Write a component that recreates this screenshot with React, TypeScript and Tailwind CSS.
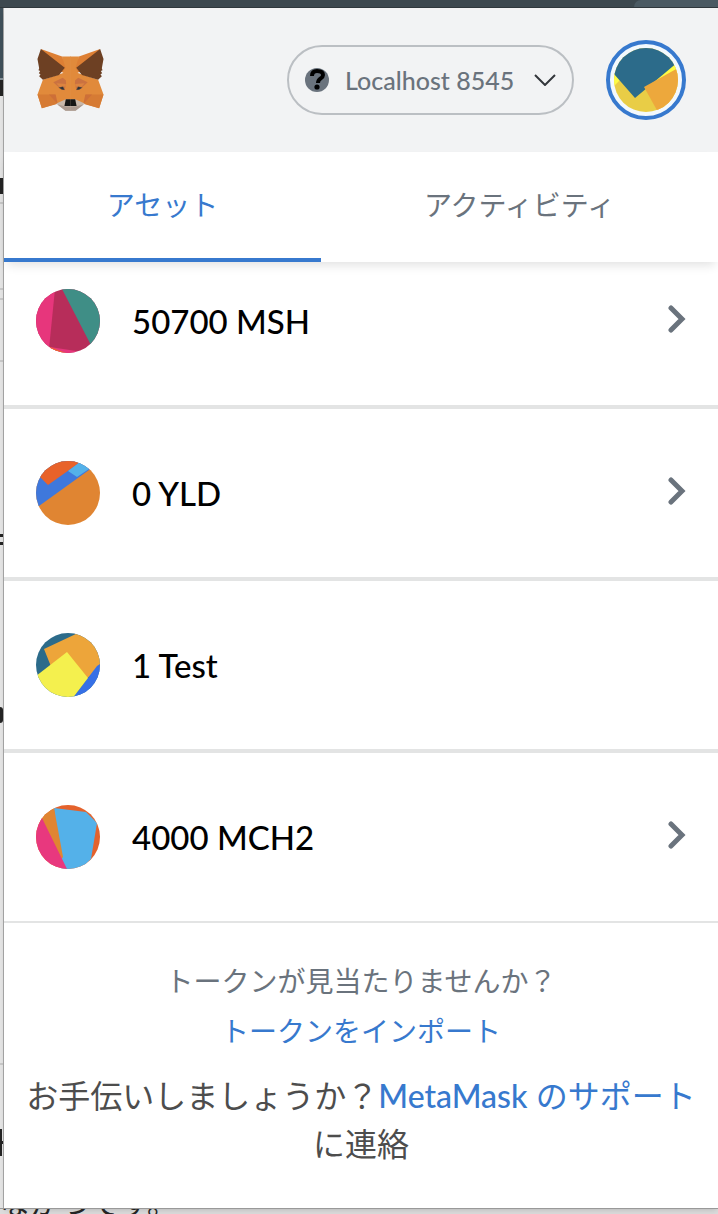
import { useState, type ReactNode } from "react";

interface Token {
  amount: string;
  symbol: string;
  hasDetails: boolean;
  icon: ReactNode;
}

const tokens: Token[] = [
  {
    amount: "50700",
    symbol: "MSH",
    hasDetails: true,
    icon: (
      <>
        <path fill="#b72d5a" d="M0 0h64v64H0z" />
        <path fill="#e7367c" d="M0 0h19l-6 60H0z" />
        <path fill="#3f8e86" d="M26 0h38v64h-5z" />
        <path fill="#e7367c" d="M14 58l26 4v2H14z" />
        <path fill="#ec6a2c" d="M14 58l16 6H14z" />
      </>
    ),
  },
  {
    amount: "0",
    symbol: "YLD",
    hasDetails: true,
    icon: (
      <>
        <path fill="#e08532" d="M0 0h64v64H0z" />
        <path fill="#3f78dc" d="M0 0h64L53 9 3 45l-3 2z" />
        <path fill="#e8622a" d="M0 0h46l-3 2-31 22-8-8z" />
        <path fill="#54b1e9" d="M32 10l9 6 15-10-8-8z" />
      </>
    ),
  },
  {
    amount: "1",
    symbol: "Test",
    hasDetails: false,
    icon: (
      <>
        <path fill="#2c6b8a" d="M0 0h64v64H0z" />
        <path fill="#eda53a" d="M8 16L42 0h22v36L50 46 16 36z" />
        <path fill="#3670e6" d="M64 31l-3 2-25 33h28z" />
        <path fill="#f4f04e" d="M0 43l31-24 21 26-16 21H0z" />
      </>
    ),
  },
  {
    amount: "4000",
    symbol: "MCH2",
    hasDetails: true,
    icon: (
      <>
        <path fill="#e4622c" d="M0 0h64v64H0z" />
        <path fill="#54b1e9" d="M18 3l32 4 11 11-6 36-10 10H24z" />
        <path fill="#e08532" d="M0 0h12l6 3 9 49-3 4L0 12z" />
        <path fill="#e8387e" d="M0 0l6 13 25 51H0z" />
      </>
    ),
  },
];

function TokenIcon({ id, children }: { id: string; children: ReactNode }) {
  return (
    <svg viewBox="0 0 64 64" className="size-16 shrink-0" aria-hidden="true">
      <clipPath id={id}>
        <circle cx="32" cy="32" r="32" />
      </clipPath>
      <g clipPath={`url(#${id})`}>{children}</g>
    </svg>
  );
}

// One side of the face, the other one is mirrored around x = 212
function FoxHalf() {
  return (
    <>
      <path fill="#e18a3b" d="M187 170h26v140h-41l-45 14-13-41 16-44 60-20z" />
      <path fill="#dd7f34" d="M124 148l63 22 10 34-8 14-30-10z" />
      <path fill="#d67b34" d="M114 283h52l6 28-45 13z" />
      <path fill="#cd6f38" d="M148 283h20l6 28z" />
      <path fill="#6d4023" d="M124 148l-10 30 5 27-2 6 5 2-4 7 5 3-4 6 11 10 48-14 17-21z" />
      <path fill="#cb7240" d="M161 247l28-14 9 8 1 10-5 20-16-9z" />
      <path fill="#dc8440" d="M170 250l28 2v7l-18 2z" />
      <path fill="#5b4a40" d="M176 262l14-3 5 11-9-1z" />
      <path fill="#2b3136" d="M181 263l8-2 3 7-6-1z" />
      <path fill="#c9b8ab" d="M170 310l28-13h15v34h-16z" />
      <path fill="#ab9a90" d="M172 312l25 7h16v12h-16z" />
      <path fill="#151515" d="M198 297h15v20h-19z" />
    </>
  );
}

function FoxLogo() {
  return (
    <svg viewBox="113 148 198 184" className="ml-px h-[62px] w-[67px]" role="img" aria-label="MetaMask">
      <FoxHalf />
      <g transform="matrix(-1 0 0 1 424 0)">
        <FoxHalf />
      </g>
    </svg>
  );
}

function NetworkPicker() {
  return (
    <button
      type="button"
      className="flex h-[70px] w-[287px] items-center rounded-full border-2 border-[#bbbfc3] px-4 text-[#6a737d]"
    >
      <svg viewBox="0 0 24 24" className="size-6 shrink-0" aria-hidden="true">
        <circle cx="12" cy="12" r="12" fill="#6a737d" />
        <path d="M7 8q0-5 5-5 6 0 6 4c0 4-5 3-5 8" fill="none" stroke="#000" strokeWidth="4" />
        <circle cx="12" cy="19" r="2.6" fill="#000" />
      </svg>
      <span className="ml-4 flex-1 text-left text-[25px] leading-8 font-medium whitespace-nowrap">
        Localhost 8545
      </span>
      <svg viewBox="0 0 22 12" className="h-3 w-[22px] shrink-0" aria-hidden="true">
        <path d="M1 1l10 10L21 1" fill="none" stroke="#33373b" strokeWidth="2" />
      </svg>
    </button>
  );
}

function AccountButton() {
  return (
    <button
      type="button"
      aria-label="アカウント"
      className="flex size-20 items-center justify-center rounded-full border-4 border-[#3779ce] bg-[#f3f9fd]"
    >
      <TokenIcon id="account">
        <path fill="#e9cd46" d="M0 0h64v64H0z" />
        <path fill="#fdfb45" d="M0 25l6 7-6 6zM40 34l20-18 4 2v8z" />
        <path fill="#2c6b8a" d="M0 0h64v14L21 50 0 26z" />
        <path fill="#eda83c" d="M30 39l34-19v44H44z" />
      </TokenIcon>
    </button>
  );
}

// Sliver of the web page that stays visible left of the popup
function PageEdge() {
  return (
    <div className="flex w-1 shrink-0 flex-col overflow-hidden border-r border-[#aaaaaa] bg-[#e4e4e4]" aria-hidden="true">
      <div className="h-[70px] bg-[#40505a]" />
      <div className="h-[2px] bg-[#87939a]" />
      <div className="h-4 bg-[#242424]" />
      <div className="h-[82px]" />
      <div className="h-4 bg-[#242424]" />
      <div className="mt-2 h-[88px] border-y-2 border-[#c8c8c8]" />
      <div className="mt-2 h-16 border-y-2 border-[#c8c8c8]" />
      <div className="mt-[172px] h-[11px] border-y-[3px] border-[#242424]" />
      <div className="mt-[162px] h-4 w-[3px] rounded-r-full bg-[#242424]" />
      <div className="mt-[340px] h-[2px] bg-[#c8c8c8]" />
      <div className="mt-16 flex h-[27px] items-center border-l-2 border-[#242424]">
        <div className="h-[3px] w-1 bg-[#242424]" />
      </div>
    </div>
  );
}

export default function App() {
  const [tab, setTab] = useState("assets");

  const tabs = [
    { id: "assets", label: "アセット" },
    { id: "activity", label: "アクティビティ" },
  ];

  return (
    <div className="flex min-h-screen flex-col bg-[#dcdcdc] font-['Lato','Noto_Sans_CJK_JP',sans-serif]">
      <div className="flex h-2 justify-end overflow-hidden border-b border-[#30383d] bg-[#3d484f]">
        <div className="w-[84px] rounded-tl-full bg-[#4b5a63]" />
      </div>

      <div className="flex flex-1">
        <PageEdge />

        <div className="flex min-w-0 flex-1 flex-col bg-white shadow-md">
          <header className="flex h-36 items-center bg-[#f2f3f4] px-8">
            <FoxLogo />
            <div className="ml-auto flex items-center gap-8">
              <NetworkPicker />
              <AccountButton />
            </div>
          </header>

          <nav className="z-10 flex h-[110px] shadow-[0_6px_10px_-3px_rgba(0,0,0,0.12)]">
            {tabs.map(({ id, label }) => (
              <button
                key={id}
                type="button"
                onClick={() => setTab(id)}
                className={`flex-auto border-b-4 text-[28px] ${
                  tab === id ? "border-[#3779ce] text-[#3779ce]" : "border-transparent text-[#6a737d]"
                }`}
              >
                {label}
              </button>
            ))}
          </nav>

          <ul>
            {tokens.map(({ amount, symbol, hasDetails, icon }) => (
              <li
                key={symbol}
                className="border-b-4 border-[#e3e4e4] first:-mt-[25px] last:border-b-2"
              >
                <button type="button" className="flex w-full items-center px-8 py-[52px] text-left">
                  <TokenIcon id={symbol}>{icon}</TokenIcon>
                  <span className="ml-8 flex-1 text-[33px] leading-10 font-medium text-black">
                    {amount} {symbol}
                  </span>
                  {hasDetails && (
                    <svg viewBox="0 0 18 28" className="mb-1 h-7 w-[18px]" aria-hidden="true">
                      <path
                        d="M3 3l11 11L3 25"
                        fill="none"
                        stroke="#6a737d"
                        strokeWidth="5"
                        strokeLinecap="round"
                      />
                    </svg>
                  )}
                </button>
              </li>
            ))}
          </ul>

          <footer className="px-4 pt-9 pb-10 text-center">
            <p className="text-[28px] leading-[44px] text-[#6a737d]">トークンが見当たりませんか？</p>
            <a href="#import" className="mt-[6px] block text-[28px] leading-[44px] text-[#3779ce]">
              トークンをインポート
            </a>
            <p className="mt-[19px] text-[32px] leading-[48px] text-[#4d4d4d]">
              お手伝いしましょうか？
              <a href="#support" className="text-[#3779ce]">
                <span className="font-medium">MetaMask</span> のサポート
              </a>
              に連絡
            </p>
          </footer>
        </div>
      </div>

      <div className="flex h-[6px] flex-col justify-end overflow-hidden border-t border-[#999999]" aria-hidden="true">
        <p className="text-[30px] leading-[24px] whitespace-nowrap text-[#242424]">なかつです。</p>
      </div>
    </div>
  );
}
